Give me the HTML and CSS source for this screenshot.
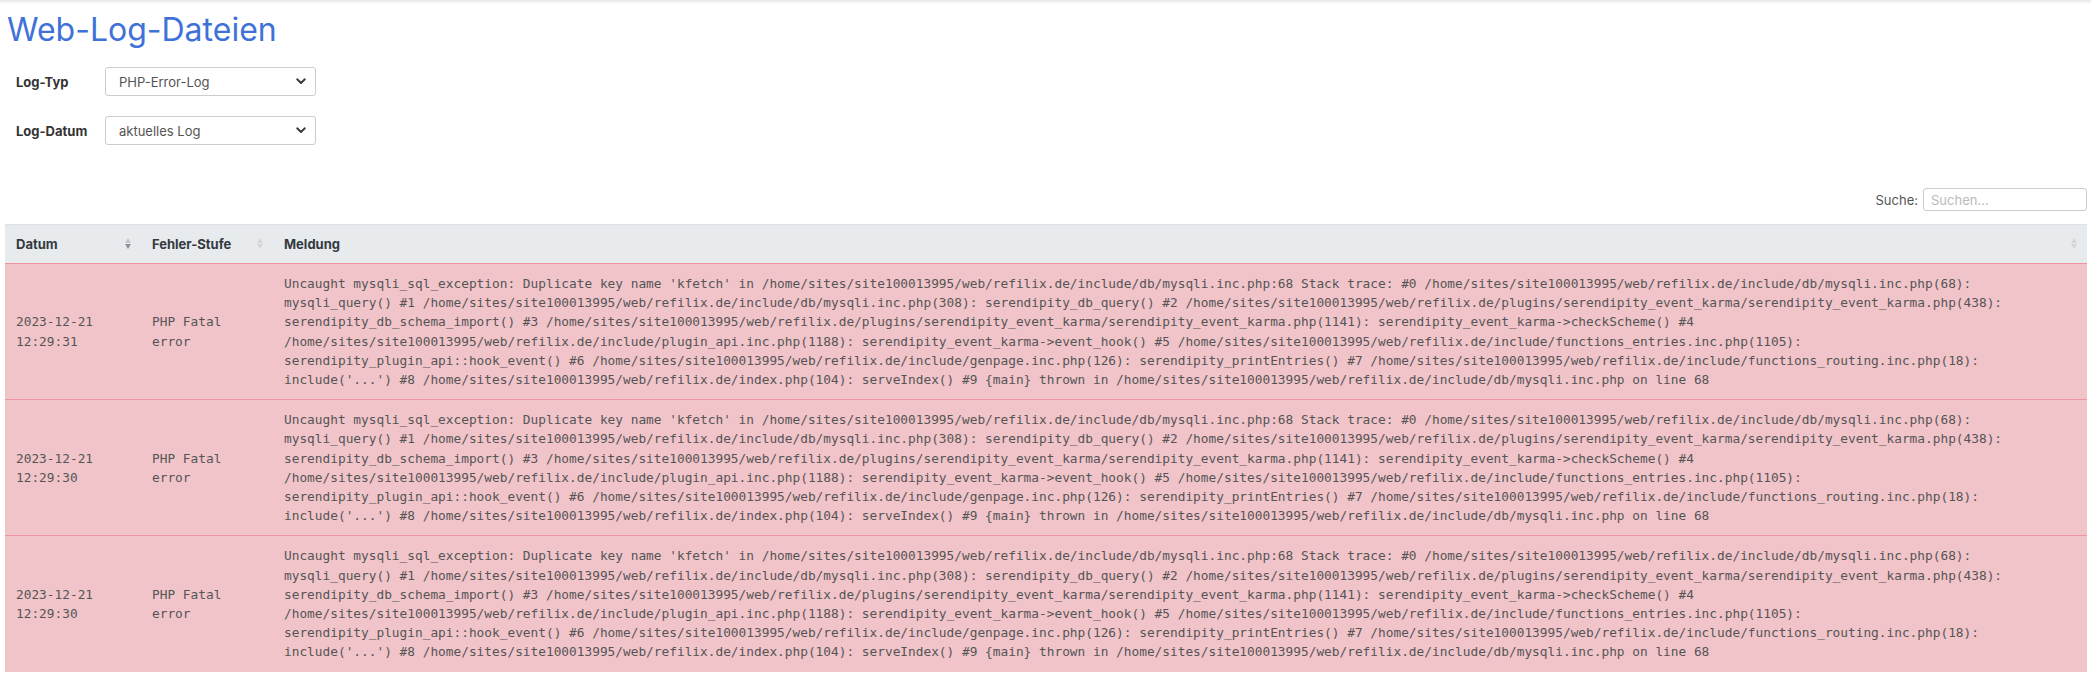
FILE: index.html
```html
<!DOCTYPE html>
<html lang="de">
<head>
    <meta charset="UTF-8">
    <title>Web-Log-Dateien</title>
    <link rel="stylesheet" href="styles.css">
</head>
<body>
    <div class="top-shadow"></div>

    <div class="page">
        <h1 class="page-title">Web-Log-Dateien</h1>

        <form class="log-form">
            <div class="form-row">
                <label class="form-label" for="log_typ">Log-Typ</label>
                <div class="select-wrap">
                    <select id="log_typ" class="form-select">
                        <option>PHP-Error-Log</option>
                    </select>
                    <svg class="select-arrow" width="10" height="7" viewBox="0 0 10 7"><path d="M1.2 1.3 5 5 8.8 1.3" fill="none" stroke="#343a40" stroke-width="1.9" stroke-linecap="round" stroke-linejoin="round"/></svg>
                </div>
            </div>
            <div class="form-row">
                <label class="form-label" for="log_datum">Log-Datum</label>
                <div class="select-wrap">
                    <select id="log_datum" class="form-select">
                        <option>aktuelles Log</option>
                    </select>
                    <svg class="select-arrow" width="10" height="7" viewBox="0 0 10 7"><path d="M1.2 1.3 5 5 8.8 1.3" fill="none" stroke="#343a40" stroke-width="1.9" stroke-linecap="round" stroke-linejoin="round"/></svg>
                </div>
            </div>
        </form>

        <div class="table-filter">
            <label for="search">Suche:</label>
            <input type="search" id="search" class="filter-input" placeholder="Suchen...">
        </div>

        <table class="log-table">
            <colgroup>
                <col class="col-date">
                <col class="col-level">
                <col>
            </colgroup>
            <thead>
                <tr>
                    <th class="sorting sorting-desc">Datum</th>
                    <th class="sorting">Fehler-Stufe</th>
                    <th class="sorting">Meldung</th>
                </tr>
            </thead>
            <tbody>
                <tr>
                    <td>2023-12-21 12:29:31</td>
                    <td>PHP Fatal error</td>
                    <td>Uncaught mysqli_sql_exception: Duplicate key name 'kfetch' in /home/sites/site100013995/web/refilix.de/include/db/mysqli.inc.php:68 Stack trace: #0 /home/sites/site100013995/web/refilix.de/include/db/mysqli.inc.php(68): mysqli_query() #1 /home/sites/site100013995/web/refilix.de/include/db/mysqli.inc.php(308): serendipity_db_query() #2 /home/sites/site100013995/web/refilix.de/plugins/serendipity_event_karma/serendipity_event_karma.php(438): serendipity_db_schema_import() #3 /home/sites/site100013995/web/refilix.de/plugins/serendipity_event_karma/serendipity_event_karma.php(1141): serendipity_event_karma-&gt;checkScheme() #4 /home/sites/site100013995/web/refilix.de/include/plugin_api.inc.php(1188): serendipity_event_karma-&gt;event_hook() #5 /home/sites/site100013995/web/refilix.de/include/functions_entries.inc.php(1105): serendipity_plugin_api::hook_event() #6 /home/sites/site100013995/web/refilix.de/include/genpage.inc.php(126): serendipity_printEntries() #7 /home/sites/site100013995/web/refilix.de/include/functions_routing.inc.php(18): include('...') #8 /home/sites/site100013995/web/refilix.de/index.php(104): serveIndex() #9 {main} thrown in /home/sites/site100013995/web/refilix.de/include/db/mysqli.inc.php on line 68</td>
                </tr>
                <tr>
                    <td>2023-12-21 12:29:30</td>
                    <td>PHP Fatal error</td>
                    <td>Uncaught mysqli_sql_exception: Duplicate key name 'kfetch' in /home/sites/site100013995/web/refilix.de/include/db/mysqli.inc.php:68 Stack trace: #0 /home/sites/site100013995/web/refilix.de/include/db/mysqli.inc.php(68): mysqli_query() #1 /home/sites/site100013995/web/refilix.de/include/db/mysqli.inc.php(308): serendipity_db_query() #2 /home/sites/site100013995/web/refilix.de/plugins/serendipity_event_karma/serendipity_event_karma.php(438): serendipity_db_schema_import() #3 /home/sites/site100013995/web/refilix.de/plugins/serendipity_event_karma/serendipity_event_karma.php(1141): serendipity_event_karma-&gt;checkScheme() #4 /home/sites/site100013995/web/refilix.de/include/plugin_api.inc.php(1188): serendipity_event_karma-&gt;event_hook() #5 /home/sites/site100013995/web/refilix.de/include/functions_entries.inc.php(1105): serendipity_plugin_api::hook_event() #6 /home/sites/site100013995/web/refilix.de/include/genpage.inc.php(126): serendipity_printEntries() #7 /home/sites/site100013995/web/refilix.de/include/functions_routing.inc.php(18): include('...') #8 /home/sites/site100013995/web/refilix.de/index.php(104): serveIndex() #9 {main} thrown in /home/sites/site100013995/web/refilix.de/include/db/mysqli.inc.php on line 68</td>
                </tr>
                <tr>
                    <td>2023-12-21 12:29:30</td>
                    <td>PHP Fatal error</td>
                    <td>Uncaught mysqli_sql_exception: Duplicate key name 'kfetch' in /home/sites/site100013995/web/refilix.de/include/db/mysqli.inc.php:68 Stack trace: #0 /home/sites/site100013995/web/refilix.de/include/db/mysqli.inc.php(68): mysqli_query() #1 /home/sites/site100013995/web/refilix.de/include/db/mysqli.inc.php(308): serendipity_db_query() #2 /home/sites/site100013995/web/refilix.de/plugins/serendipity_event_karma/serendipity_event_karma.php(438): serendipity_db_schema_import() #3 /home/sites/site100013995/web/refilix.de/plugins/serendipity_event_karma/serendipity_event_karma.php(1141): serendipity_event_karma-&gt;checkScheme() #4 /home/sites/site100013995/web/refilix.de/include/plugin_api.inc.php(1188): serendipity_event_karma-&gt;event_hook() #5 /home/sites/site100013995/web/refilix.de/include/functions_entries.inc.php(1105): serendipity_plugin_api::hook_event() #6 /home/sites/site100013995/web/refilix.de/include/genpage.inc.php(126): serendipity_printEntries() #7 /home/sites/site100013995/web/refilix.de/include/functions_routing.inc.php(18): include('...') #8 /home/sites/site100013995/web/refilix.de/index.php(104): serveIndex() #9 {main} thrown in /home/sites/site100013995/web/refilix.de/include/db/mysqli.inc.php on line 68</td>
                </tr>
            </tbody>
        </table>
    </div>
</body>
</html>
```

FILE: styles.css
```css
body{
    margin: 0;
    font-family: Inter, "Liberation Sans", sans-serif;
    font-size: 13px;
    color: #333;
    background: #fff;
}

.top-shadow{
    height: 4px;
    background: linear-gradient(#e6e6e6, #fff);
}

.page{
    padding: 0 4px 0 5px;
}

/* title */
.page-title{
    margin: 7px 0 0 2px;
    font-size: 32px;
    font-weight: 400;
    line-height: 38px;
    color: #3f72d8;
}

/* form */
.log-form{
    margin-top: 18px;
    padding-left: 11px;
}
.form-row{
    display: flex;
    align-items: center;
    margin-bottom: 20px;
}
.form-label{
    width: 89px;
    font-weight: 700;
    color: #333;
}
.select-wrap{
    position: relative;
    width: 211px;
}
.form-select{
    -webkit-appearance: none;
    appearance: none;
    display: block;
    width: 100%;
    height: 29px;
    padding: 0 24px 0 13px;
    border: 1px solid #ccc;
    border-radius: 3px;
    background: #fff;
    font-family: Inter, "Liberation Sans", sans-serif;
    font-size: 13px;
    color: #555;
}
.select-arrow{
    position: absolute;
    right: 10px;
    top: 11px;
    pointer-events: none;
}

/* search */
.table-filter{
    display: flex;
    justify-content: flex-end;
    align-items: center;
    gap: 5px;
    margin-top: 43px;
    color: #555;
}
.filter-input{
    -webkit-appearance: none;
    appearance: none;
    box-sizing: border-box;
    width: 164px;
    height: 23px;
    padding: 0 7px;
    border: 1px solid #ccc;
    border-radius: 3px;
    font-family: Inter, "Liberation Sans", sans-serif;
    font-size: 13px;
    color: #555;
}
.filter-input::placeholder{ color: #bbb; }

/* table */
.log-table{
    width: 100%;
    margin-top: 13px;
    border-collapse: collapse;
    table-layout: fixed;
}
.col-date{ width: 136px; }
.col-level{ width: 132px; }

.log-table th{
    position: relative;
    height: 39px;
    padding: 0 11px;
    box-sizing: border-box;
    border-top: 1px solid #dee2e6;
    background-color: #e8ebee;
    text-align: left;
    font-weight: 700;
    color: #343a40;
}

.sorting:before,
.sorting:after{
    content: '';
    position: absolute;
    right: 10px;
    width: 0;
    height: 0;
    border-left: 3px solid transparent;
    border-right: 3px solid transparent;
}
.sorting:before{
    bottom: 50%;
    margin-bottom: 1px;
    border-bottom: 5px solid #d3d6d9;
}
.sorting:after{
    top: 50%;
    margin-top: 0;
    border-top: 5px solid #d3d6d9;
}
.sorting-desc:before{ border-bottom-color: #c4c7ca; }
.sorting-desc:after{ border-top-color: #8d9195; }

.log-table td{
    padding: 10px 11px;
    border-top: 1px solid #ec949f;
    background-color: #f1c4ca;
    vertical-align: middle;
    font-family: "DejaVu Sans Mono", "Liberation Mono", monospace;
    font-size: 12.8px;
    line-height: 19.2px;
    color: #555;
    word-wrap: break-word;
}
```
